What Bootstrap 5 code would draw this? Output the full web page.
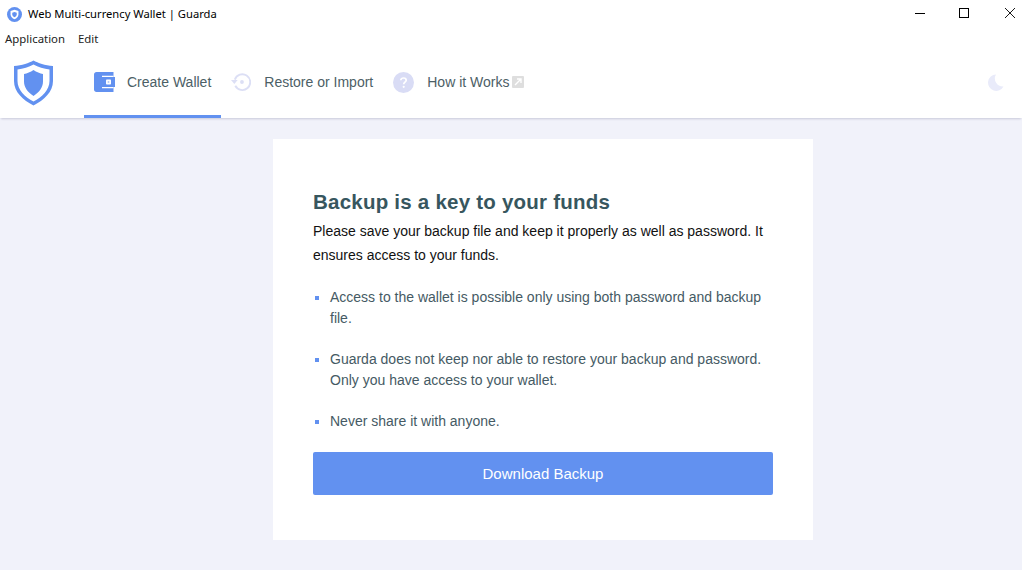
<!DOCTYPE html>
<html lang="en">
<head>
<meta charset="utf-8">
<title>Web Multi-currency Wallet | Guarda</title>
<link href="https://cdn.jsdelivr.net/npm/bootstrap@5.3.0/dist/css/bootstrap.min.css" rel="stylesheet">
<style>
html,body{height:570px;overflow:hidden}
body{background:#f1f2fa;font-family:"Liberation Sans",Arial,sans-serif;color:#37474f}
.win-title{height:28px;background:#fff;padding-left:7px;font:11.2px/28px "Noto Sans",sans-serif;color:#000;gap:6px}
.win-controls{margin-left:auto;align-self:flex-start}
.win-controls button{width:24px;height:26px;border:0;background:none;padding:0;display:flex;align-items:center;justify-content:center}
.win-controls button:nth-child(2){margin:0 22px 0 20.5px}
.win-menu{height:22px;background:#fff;padding-left:5px;gap:13px;font:11.4px/22px "Noto Sans",sans-serif;color:#222}
.app-nav{height:68px;background:#fff;box-shadow:0 2px 2px -1px rgba(60,60,110,.22);position:relative}
.brand-box{width:84px;padding-left:14px;padding-top:10px}
.tab-item{height:68px;display:flex;align-items:center;font-size:14px;color:#4c6066;text-decoration:none;padding:0 9px 1px 11px;gap:13px;border-bottom:3px solid transparent}
.tab-item.is-on{border-bottom-color:#6291f0;padding:0 10px 1px 10px;gap:11px}
.tab-item.is-next{padding-left:10px}
.moon-box{margin-left:auto;padding-right:18px;padding-bottom:3px}
.panel-outer{padding-top:21px}
.panel-box{width:540px;height:401px;background:#fff;padding:50px 40px 0 40px;margin-left:273px}
.panel-h{font-size:20.5px;line-height:25px;font-weight:700;color:#37565e;margin:0 0 5px;letter-spacing:.23px}
.panel-p{font-size:14px;line-height:24px;color:#111;margin:0 0 20px}
.panel-list{list-style:none;margin:0;padding:0}
.panel-list li{position:relative;padding-left:17px;font-size:14px;line-height:21px;color:#455a64;margin-bottom:20px;padding-right:5px}
.panel-list li::before{content:"";position:absolute;left:2px;top:9px;width:4px;height:4px;background:#6291f0}
.dl-btn{display:block;width:460px;height:43px;background:#6291f0;border:0;color:#fff;font-size:15px;line-height:43px;padding:0;border-radius:2px}
.ext-wrap{gap:3px}
</style>
</head>
<body>
<div class="win-title d-flex align-items-center">
  <svg width="15" height="15" viewBox="0 0 16 16"><circle cx="8" cy="8" r="8" fill="#6291f0"/><path d="M8 3 12.200 4.200V8c0 2.400-1.800 4-4.200 5-2.400-1-4.200-2.600-4.200-5V4.200Z" fill="#fff"/><path d="M8 5.200 10.400 6V8c0 1.300-1 2.200-2.400 2.800C6.600 10.200 5.600 9.300 5.600 8V6Z" fill="#6291f0"/></svg>
  <span>Web Multi-currency Wallet | Guarda</span>
  <div class="win-controls d-flex">
    <button type="button" aria-label="Minimize"><svg width="10" height="10" viewBox="0 0 10 10"><path d="M0 5.500H10" stroke="#000" stroke-width="1"/></svg></button>
    <button type="button" aria-label="Maximize"><svg width="10" height="10" viewBox="0 0 10 10"><rect x=".5" y=".5" width="9" height="9" fill="none" stroke="#000"/></svg></button>
    <button type="button" aria-label="Close"><svg width="10" height="10" viewBox="0 0 10 10"><path d="M0 0 10 10M10 0 0 10" stroke="#000" stroke-width=".9"/></svg></button>
  </div>
</div>
<div class="win-menu d-flex"><span>Application</span><span>Edit</span></div>
<nav class="app-nav d-flex">
  <div class="brand-box">
    <svg width="40" height="46" viewBox="0 0 40 46"><path d="M19.500.5C24 3 31 5.500 39 6V21C39 32 30 40 19.500 45.500 9 40 0 32 0 21V6C8 5.500 15 3 19.500.5Z" fill="#6291f0"/><path d="M19.500 4.500C24 7 30 9 35.500 9.500V21C35.500 30 28 37 19.500 41.500 11 37 3.500 30 3.500 21V9.500C9 9 15 7 19.500 4.500Z" fill="#fff"/><path d="M19.500 10C22.500 12 26 13.500 29 14V21.500C29 27.500 25 32.500 19.500 36 14 32.500 10 27.500 10 21.500V14C13 13.500 16.500 12 19.500 10Z" fill="#6291f0"/></svg>
  </div>
  <a class="tab-item is-on" href="#">
    <svg width="22" height="20" viewBox="0 0 22 20"><path d="M2.500 0H19.500V5H21V15H19.500V20H2.500C1.100 20 0 18.900 0 17.500V2.500C0 1.100 1.100 0 2.500 0Z" fill="#6291f0"/><path d="M8 3.800H19.500V5H8ZM8 15H19.500V16.200H8Z" fill="#fff"/><rect x="12" y="7.500" width="5" height="5" rx=".8" fill="#fff"/><rect x="13.700" y="9.200" width="1.600" height="1.600" fill="#a9c3f6"/></svg>
    <span>Create Wallet</span>
  </a>
  <a class="tab-item is-next" href="#">
    <svg width="20" height="20" viewBox="0 0 21 20"><path d="M4 7.500A8.300 8.300 0 1 1 4.500 14" fill="none" stroke="#dcdff5" stroke-width="2"/><path d="M0 8H7L3.500 12Z" fill="#dcdff5"/><circle cx="11.500" cy="10" r="2" fill="#dcdff5"/></svg>
    <span>Restore or Import</span>
  </a>
  <a class="tab-item" href="#">
    <svg width="21" height="21" viewBox="0 0 21 21"><circle cx="10.500" cy="10.500" r="10.500" fill="#d9dcf5"/><path d="M7.800 8.300C7.800 6.800 9 6 10.500 6S13.200 6.900 13.200 8.200C13.200 10 10.700 10.200 10.700 12.200" fill="none" stroke="#fff" stroke-width="1.700"/><circle cx="10.700" cy="14.800" r="1.100" fill="#fff"/></svg>
    <span class="d-flex align-items-center ext-wrap">How it Works
      <svg width="12" height="12" viewBox="0 0 12 12"><rect width="12" height="12" rx="1" fill="#dedede"/><path d="M3 9 8.500 3.500M5 3H9V7" fill="none" stroke="#fff" stroke-width="1.400"/></svg>
    </span>
  </a>
  <div class="moon-box d-flex align-items-center">
    <svg width="17" height="17" viewBox="0 0 17 17"><path d="M9 .5A8.200 8.200 0 1 0 16.500 12.500 8 8 0 0 1 9 .5Z" fill="#e9ebfa"/></svg>
  </div>
</nav>
<main class="panel-outer">
  <section class="panel-box">
    <h1 class="panel-h">Backup is a key to your funds</h1>
    <p class="panel-p">Please save your backup file and keep it properly as well as password. It ensures access to your funds.</p>
    <ul class="panel-list">
      <li>Access to the wallet is possible only using both password and backup file.</li>
      <li>Guarda does not keep nor able to restore your backup and password. Only you have access to your wallet.</li>
      <li>Never share it with anyone.</li>
    </ul>
    <button type="button" class="dl-btn btn">Download Backup</button>
  </section>
</main>
<script src="https://cdn.jsdelivr.net/npm/bootstrap@5.3.0/dist/js/bootstrap.bundle.min.js"></script>
</body>
</html>
